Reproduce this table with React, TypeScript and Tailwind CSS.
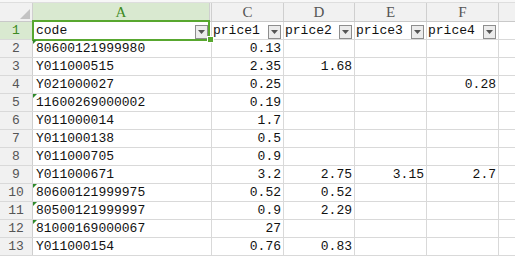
import React from "react";

type Row = {
  code: string;
  flag?: boolean;
  p1?: string;
  p2?: string;
  p3?: string;
  p4?: string;
};

const rows: Row[] = [
  { code: "80600121999980", flag: true, p1: "0.13" },
  { code: "Y011000515", p1: "2.35", p2: "1.68" },
  { code: "Y021000027", p1: "0.25", p4: "0.28" },
  { code: "11600269000002", flag: true, p1: "0.19" },
  { code: "Y011000014", p1: "1.7" },
  { code: "Y011000138", p1: "0.5" },
  { code: "Y011000705", p1: "0.9" },
  { code: "Y011000671", p1: "3.2", p2: "2.75", p3: "3.15", p4: "2.7" },
  { code: "80600121999975", flag: true, p1: "0.52", p2: "0.52" },
  { code: "80500121999997", flag: true, p1: "0.9", p2: "2.29" },
  { code: "81000169000067", flag: true, p1: "27" },
  { code: "Y011000154", p1: "0.76", p2: "0.83" },
];

const font = { fontFamily: '"Liberation Mono", "Noto Sans CJK SC", monospace' };
const letterFont = { fontFamily: '"Liberation Serif", "Noto Sans CJK SC", serif' };

function FilterButton() {
  return (
    <span className="absolute right-[2px] top-[3px] flex h-[14px] w-[13px] items-center justify-center border border-[#8e8e8e] bg-[#ececec]">
      <svg width="7" height="4" viewBox="0 0 7 4">
        <path d="M0 0h7L3.5 4z" fill="#555" />
      </svg>
    </span>
  );
}

function NumCell({ v, w }: { v?: string; w: string }) {
  return (
    <div
      className={`${w} flex h-full shrink-0 items-center justify-end border-r border-[#d9d9d9] pr-[2px] pt-[1px]`}
    >
      {v}
    </div>
  );
}

function HeadCell({ label, w }: { label: string; w: string }) {
  return (
    <div
      className={`${w} relative flex h-full shrink-0 items-center border-r border-[#d9d9d9] pl-[1px] pt-[1px]`}
    >
      {label}
      <FilterButton />
    </div>
  );
}

function ColLetter({ l, w }: { l: string; w: string }) {
  return (
    <div
      className={`${w} flex shrink-0 items-center justify-center border-r border-[#cfcfcf] text-[15px]`}
      style={letterFont}
    >
      {l}
    </div>
  );
}

export default function App() {
  return (
    <div
      className="h-[256px] w-[515px] overflow-hidden bg-white text-[13px] text-[#111]"
      style={font}
    >
      {/* column header strip */}
      <div className="h-[3px] border-b border-[#dedede] bg-[#f7f7f7]" />
      <div className="flex h-[19px] border-b border-[#c9c9c9] bg-[#f1f1f1] text-[#555]">
        <div className="relative w-[33px] shrink-0 border-r border-[#cfcfcf]">
          <svg className="absolute bottom-[2px] right-[2px]" width="10" height="10" viewBox="0 0 10 10">
            <path d="M10 0V10H0z" fill="#c3c3c3" />
          </svg>
        </div>
        <div
          className="flex w-[177px] shrink-0 items-center justify-center border-r border-[#cfcfcf] bg-[#d9e9d0] text-[15px] text-[#3d8a22]"
          style={letterFont}
        >
          A
        </div>
        <div className="w-[2px] shrink-0 border-r border-[#cfcfcf]" />
        <ColLetter l="C" w="w-[72px]" />
        <ColLetter l="D" w="w-[71px]" />
        <ColLetter l="E" w="w-[72px]" />
        <ColLetter l="F" w="w-[72px]" />
        <div className="flex-1" />
      </div>

      {/* row 1 with filters */}
      <div className="flex h-[18px] border-b border-[#d9d9d9]">
        <div className="flex w-[33px] shrink-0 items-center justify-center border-r border-[#cfcfcf] bg-[#d9e9d0] pt-[1px] text-[#3d8a22]">
          1
        </div>
        <div className="relative flex h-full w-[177px] shrink-0 items-center pl-[3px] pt-[1px]">
          code
          <FilterButton />
          <div className="pointer-events-none absolute -left-[1px] -top-[2px] h-[21px] w-[178px] border-2 border-[#58a72f]" />
          <div className="absolute -bottom-[3px] -right-[3px] h-[5px] w-[5px] bg-[#58a72f] outline outline-1 outline-white" />
        </div>
        <div className="w-[2px] shrink-0 border-r border-[#d9d9d9]" />
        <HeadCell label="price1" w="w-[72px]" />
        <HeadCell label="price2" w="w-[71px]" />
        <HeadCell label="price3" w="w-[72px]" />
        <HeadCell label="price4" w="w-[72px]" />
        <div className="flex-1" />
      </div>

      {rows.map((r, i) => (
        <div key={i} className="flex h-[18px] border-b border-[#d9d9d9]">
          <div className="flex w-[33px] shrink-0 items-center justify-center border-r border-[#cfcfcf] bg-[#f1f1f1] pt-[1px] text-[#555]">
            {i + 2}
          </div>
          <div className="relative flex h-full w-[177px] shrink-0 items-center pl-[3px] pt-[1px]">
            {r.flag ? (
              <svg className="absolute left-0 top-0" width="4" height="4" viewBox="0 0 4 4">
                <path d="M0 0H4L0 4z" fill="#2f8a2a" />
              </svg>
            ) : null}
            {r.code}
          </div>
          <div className="w-[2px] shrink-0 border-r border-[#d9d9d9]" />
          <NumCell v={r.p1} w="w-[72px]" />
          <NumCell v={r.p2} w="w-[71px]" />
          <NumCell v={r.p3} w="w-[72px]" />
          <NumCell v={r.p4} w="w-[72px]" />
          <div className="flex-1" />
        </div>
      ))}
    </div>
  );
}
